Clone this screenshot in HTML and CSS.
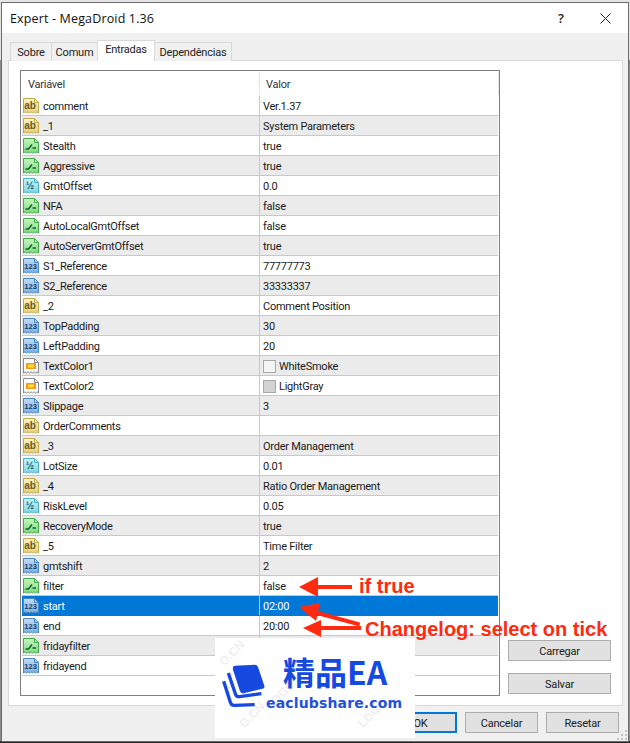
FILE: index.html
```html
<!DOCTYPE html>
<html lang="pt">
<head>
<meta charset="utf-8">
<title>Expert - MegaDroid 1.36</title>
<link rel="stylesheet" href="styles.css">
</head>
<body>
<svg class="defs" width="0" height="0" aria-hidden="true">
  <defs>
    <linearGradient id="gy" x1="0" y1="0" x2="0" y2="1"><stop offset="0" stop-color="#fbf3c4"/><stop offset="1" stop-color="#e6d27c"/></linearGradient>
    <linearGradient id="gg" x1="0" y1="0" x2="0" y2="1"><stop offset="0" stop-color="#c5f5c0"/><stop offset="1" stop-color="#7fdc82"/></linearGradient>
    <linearGradient id="gc" x1="0" y1="0" x2="0" y2="1"><stop offset="0" stop-color="#cdf3f7"/><stop offset="1" stop-color="#7fd6e4"/></linearGradient>
    <linearGradient id="gb" x1="0" y1="0" x2="0" y2="1"><stop offset="0" stop-color="#c3dcf3"/><stop offset="1" stop-color="#7eb0e0"/></linearGradient>
    <path id="page" d="M.5 .5H11.5L15.5 4.5V15L14 13.8 12.5 15 11 13.8 9.5 15 8 13.8 6.5 15 5 13.8 3.5 15 2 13.8 .5 15Z"/>
    <path id="fold" d="M11.5 .5V4.5H15.5" fill="none"/>
    <symbol id="i-ab" viewBox="0 0 16 16">
      <use href="#page" fill="url(#gy)" stroke="#c2a94e"/><use href="#fold" stroke="#c2a94e"/>
      <text x="7" y="11" class="ic-txt ic-ab">ab</text>
    </symbol>
    <symbol id="i-bool" viewBox="0 0 16 16">
      <use href="#page" fill="url(#gg)" stroke="#45a84b"/><use href="#fold" stroke="#45a84b"/>
      <path d="M2.5 11H5.5L9 6.5" fill="none" stroke="#12622a" stroke-width="1.5"/><path d="M9.5 10H13" fill="none" stroke="#12622a" stroke-width="1.5"/>
    </symbol>
    <symbol id="i-dbl" viewBox="0 0 16 16">
      <use href="#page" fill="url(#gc)" stroke="#4aaec4"/><use href="#fold" stroke="#4aaec4"/>
      <text x="6.8" y="11" class="ic-txt ic-half">½</text>
    </symbol>
    <symbol id="i-int" viewBox="0 0 16 16">
      <use href="#page" fill="url(#gb)" stroke="#4b86c0"/><use href="#fold" stroke="#4b86c0"/>
      <text x="7.6" y="10.8" class="ic-txt ic-num">123</text>
    </symbol>
    <symbol id="i-col" viewBox="0 0 16 16">
      <use href="#page" fill="#fdfdfd" stroke="#8a8a8a"/><use href="#fold" stroke="#8a8a8a"/>
      <rect x="3" y="5" width="10" height="6" fill="#f7941a"/>
      <rect x="5" y="6.5" width="6" height="3" fill="#ffe23a"/>
    </symbol>
  </defs>
</svg>

<div class="window">
  <header class="titlebar">
    <h1 class="title">Expert - MegaDroid 1.36</h1>
    <span class="help">?</span>
    <svg class="close" width="11" height="11" viewBox="0 0 11 11"><path d="M.5 .5L10.5 10.5M10.5 .5L.5 10.5" stroke="#222" stroke-width="1" fill="none"/></svg>
  </header>

  <div class="content">
    <nav class="tabs">
      <span class="tab">Sobre</span>
      <span class="tab tab-w2">Comum</span>
      <span class="tab tab-active">Entradas</span>
      <span class="tab tab-w4">Dependências</span>
    </nav>

    <section class="panel">
      <div class="grid">
        <div class="head"><span class="head-var">Variável</span><span class="head-val">Valor</span></div>

        <div class="row"><div class="name"><svg class="ico"><use href="#i-ab"/></svg>comment</div><div class="val">Ver.1.37</div></div>
        <div class="row alt"><div class="name"><svg class="ico"><use href="#i-ab"/></svg>_1</div><div class="val">System Parameters</div></div>
        <div class="row"><div class="name"><svg class="ico"><use href="#i-bool"/></svg>Stealth</div><div class="val">true</div></div>
        <div class="row alt"><div class="name"><svg class="ico"><use href="#i-bool"/></svg>Aggressive</div><div class="val">true</div></div>
        <div class="row"><div class="name"><svg class="ico"><use href="#i-dbl"/></svg>GmtOffset</div><div class="val">0.0</div></div>
        <div class="row alt"><div class="name"><svg class="ico"><use href="#i-bool"/></svg>NFA</div><div class="val">false</div></div>
        <div class="row"><div class="name"><svg class="ico"><use href="#i-bool"/></svg>AutoLocalGmtOffset</div><div class="val">false</div></div>
        <div class="row alt"><div class="name"><svg class="ico"><use href="#i-bool"/></svg>AutoServerGmtOffset</div><div class="val">true</div></div>
        <div class="row"><div class="name"><svg class="ico"><use href="#i-int"/></svg>S1_Reference</div><div class="val">77777773</div></div>
        <div class="row alt"><div class="name"><svg class="ico"><use href="#i-int"/></svg>S2_Reference</div><div class="val">33333337</div></div>
        <div class="row"><div class="name"><svg class="ico"><use href="#i-ab"/></svg>_2</div><div class="val">Comment Position</div></div>
        <div class="row alt"><div class="name"><svg class="ico"><use href="#i-int"/></svg>TopPadding</div><div class="val">30</div></div>
        <div class="row"><div class="name"><svg class="ico"><use href="#i-int"/></svg>LeftPadding</div><div class="val">20</div></div>
        <div class="row alt"><div class="name"><svg class="ico"><use href="#i-col"/></svg>TextColor1</div><div class="val"><span class="swatch sw-smoke"></span>WhiteSmoke</div></div>
        <div class="row"><div class="name"><svg class="ico"><use href="#i-col"/></svg>TextColor2</div><div class="val"><span class="swatch sw-gray"></span>LightGray</div></div>
        <div class="row alt"><div class="name"><svg class="ico"><use href="#i-int"/></svg>Slippage</div><div class="val">3</div></div>
        <div class="row"><div class="name"><svg class="ico"><use href="#i-ab"/></svg>OrderComments</div><div class="val"></div></div>
        <div class="row alt"><div class="name"><svg class="ico"><use href="#i-ab"/></svg>_3</div><div class="val">Order Management</div></div>
        <div class="row"><div class="name"><svg class="ico"><use href="#i-dbl"/></svg>LotSize</div><div class="val">0.01</div></div>
        <div class="row alt"><div class="name"><svg class="ico"><use href="#i-ab"/></svg>_4</div><div class="val">Ratio Order Management</div></div>
        <div class="row"><div class="name"><svg class="ico"><use href="#i-dbl"/></svg>RiskLevel</div><div class="val">0.05</div></div>
        <div class="row alt"><div class="name"><svg class="ico"><use href="#i-bool"/></svg>RecoveryMode</div><div class="val">true</div></div>
        <div class="row"><div class="name"><svg class="ico"><use href="#i-ab"/></svg>_5</div><div class="val">Time Filter</div></div>
        <div class="row alt"><div class="name"><svg class="ico"><use href="#i-int"/></svg>gmtshift</div><div class="val">2</div></div>
        <div class="row"><div class="name"><svg class="ico"><use href="#i-bool"/></svg>filter</div><div class="val">false</div></div>
        <div class="row sel"><div class="name"><svg class="ico"><use href="#i-int"/></svg>start</div><div class="val">02:00</div></div>
        <div class="row"><div class="name"><svg class="ico"><use href="#i-int"/></svg>end</div><div class="val">20:00</div></div>
        <div class="row alt"><div class="name"><svg class="ico"><use href="#i-bool"/></svg>fridayfilter</div><div class="val"></div></div>
        <div class="row"><div class="name"><svg class="ico"><use href="#i-int"/></svg>fridayend</div><div class="val"></div></div>
      </div>

      <aside class="side">
        <button class="btn btn-side">Carregar</button>
        <button class="btn btn-side">Salvar</button>
      </aside>
    </section>

    <footer class="footer">
      <button class="btn btn-foot btn-ok">OK</button>
      <button class="btn btn-foot">Cancelar</button>
      <button class="btn btn-foot">Resetar</button>
    </footer>
  </div>

  <svg class="grip" width="11" height="11" viewBox="0 0 11 11"><path d="M8 0h2v2H8zM4 4h2v2H4zM8 4h2v2H8zM0 8h2v2H0zM4 8h2v2H4zM8 8h2v2H8z" fill="#c4c4c4"/></svg>
</div>

<svg class="arrows" width="630" height="743" viewBox="0 0 630 743" aria-hidden="true">
  <path d="M352 585H316V589H352Z" fill="#ff2a10"/>
  <path d="M299 587L318 577V597Z" fill="#ff2a10"/>
  <path d="M360 622.5L316 610.5 315 614.5 359.5 626.5Z" fill="#ff2a10"/>
  <path d="M299 607L320 603 316 621Z" fill="#ff2a10"/>
  <path d="M361 626H318V630H361Z" fill="#ff2a10"/>
  <path d="M303 628L321 620V637Z" fill="#ff2a10"/>
</svg>
<span class="note note-if">if true</span>
<span class="note note-log">Changelog: select on tick</span>

<div class="promo">
  <span class="wm wm1">O.CN</span>
  <span class="wm wm2">LOGO</span>
  <span class="wm wm3">LOGO</span>
  <span class="wm wm4">G.CN</span>
  <svg class="promo-logo" width="44" height="45" viewBox="15 80 130 135">
    <path d="M50 93Q50 88 56 88L116 85Q122 85 125 92L144 148Q146 156 138 157L82 171Q74 172 71 165L50 100Z" fill="#1549e0"/>
    <path d="M36 110L57 172Q60 182 70 181L135 172" fill="none" stroke="#1549e0" stroke-width="10"/>
    <path d="M22 135L42 198Q45 208 55 207L115 205" fill="none" stroke="#1549e0" stroke-width="10"/>
  </svg>
  <div class="promo-text">
    <div class="promo-cn">精品EA</div>
    <div class="promo-url">eaclubshare.com</div>
  </div>
</div>
</body>
</html>
```

FILE: styles.css
```css
* { box-sizing: border-box; }
html, body { margin: 0; padding: 0; }
body {
  width: 630px;
  height: 743px;
  overflow: hidden;
  position: relative;
  background: linear-gradient(to bottom, #e4e4e4 0, #e4e4e4 60px, #8d8d8d 60px, #8d8d8d 741px, #222 741px);
  font-family: "Open Sans", "Noto Sans", sans-serif;
  padding: 2px 1px 1px 1px;
}
.defs { position: absolute; }

.window {
  position: relative;
  width: 628px;
  height: 740px;
  border: 1px solid #6c6c6c;
  background: #f0f0f0;
  display: flex;
  flex-direction: column;
}

.titlebar {
  height: 30px;
  background: #fff;
  display: flex;
  align-items: center;
  padding: 0 17px 0 8px;
  flex: none;
}
.title {
  margin: 0;
  font-family: "Open Sans", sans-serif;
  font-weight: 400;
  font-size: 12.5px;
  letter-spacing: .15px;
  color: #111;
  flex: 1;
}
.help { font-size: 13px; color: #222; font-weight: 600; margin-right: 36px; }
.close { flex: none; }

.content {
  flex: 1;
  display: flex;
  flex-direction: column;
  padding: 7px 6px 0 6px;
}

.tabs {
  display: flex;
  align-items: flex-end;
  height: 21px;
  padding-left: 2px;
  position: relative;
  z-index: 1;
  margin-bottom: -1px;
}
.tab {
  height: 19px;
  width: 42px;
  border: 1px solid #d9d9d9;
  border-bottom: 0;
  background: #f0f0f0;
  font-family: "Roboto", sans-serif;
  font-size: 11px;
  letter-spacing: -.2px;
  color: #222;
  display: flex;
  align-items: center;
  justify-content: center;
  margin-right: -1px;
}
.tab-w2 { width: 47px; }
.tab-active { width: 58px; height: 21px; background: #fff; z-index: 1; padding-bottom: 3px; }
.tab-w4 { width: 78px; }

.panel {
  height: 646px;
  width: 615px;
  background: #fff;
  border: 1px solid #d9d9d9;
  padding: 9px 0 0 11px;
  display: flex;
  flex: none;
}

.grid {
  width: 480px;
  height: 626px;
  border: 1px solid #7f7f7f;
  padding-left: 1px;
  padding-top: 1px;
  flex: none;
  font-family: "Roboto", sans-serif;
  font-size: 11px;
  letter-spacing: -.25px;
  color: #1a1a1a;
}
.head {
  height: 23px;
  display: grid;
  grid-template-columns: 237px 1fr;
  align-items: center;
  color: #333;
  margin-bottom: 1px;
  border-right: 1px solid #e5e5e5;
}
.head-var { padding: 2px 0 0 6px; }
.head-val { padding: 2px 0 0 6px; border-left: 1px solid #e5e5e5; height: 100%; display: flex; align-items: center; }

.row {
  height: 20px;
  display: grid;
  grid-template-columns: 237px 1fr;
  border-bottom: 1px solid #c8c8c8;
  width: 476px;
}
.row.alt { background: #ebebeb; }
.row.sel { background: #0078d7; color: #fff; border-bottom-color: #0078d7; }
.name { display: flex; align-items: center; gap: 4px; padding: 1px 0 0 1px; white-space: nowrap; }
.val {
  display: flex;
  align-items: center;
  border-left: 1px solid #c8c8c8;
  padding: 1px 0 0 3px;
  white-space: nowrap;
}
.ico { width: 16px; height: 16px; flex: none; display: block; }
.ic-txt { font-family: "Liberation Sans", sans-serif; text-anchor: middle; letter-spacing: 0; }
.ic-ab { font-size: 10px; font-weight: 700; fill: #6a5a20; }
.ic-half { font-size: 10px; fill: #0f5a70; font-weight: 700; }
.ic-num { font-size: 7.5px; font-weight: 700; fill: #123f70; }
.swatch { width: 13px; height: 13px; border: 1px solid #a8a8a8; margin-right: 3px; flex: none; }
.sw-smoke { background: #f5f5f5; }
.sw-gray { background: #d3d3d3; }

.side {
  width: 103px;
  margin-left: 8px;
  display: flex;
  flex-direction: column;
  gap: 12px;
  padding-top: 570px;
}
.btn {
  font-family: "Roboto", sans-serif;
  font-size: 11px;
  letter-spacing: -.2px;
  color: #1a1a1a;
  background: #e1e1e1;
  border: 1px solid #adadad;
  padding: 1px 0 0;
  border-radius: 0;
}
.btn-side { width: 103px; height: 21px; }

.footer {
  display: flex;
  justify-content: flex-end;
  gap: 8px;
  padding: 6px 3px 0 0;
}
.btn-foot { width: 73px; height: 21px; }
.btn-ok { border: 2px solid #0078d7; }

.grip { position: absolute; right: 0; bottom: 0; }

.arrows { position: absolute; left: 0; top: 0; pointer-events: none; }
.note {
  position: absolute;
  font-family: "Liberation Sans", sans-serif;
  font-weight: 700;
  font-size: 20px;
  line-height: 22px;
  color: #ff2a10;
  white-space: nowrap;
}
.note-if { left: 359px; top: 575px; }
.note-log { left: 365px; top: 618px; }

.promo {
  position: absolute;
  left: 215px;
  top: 638px;
  width: 200px;
  height: 100px;
  background: #fff;
  overflow: hidden;
  display: flex;
  align-items: flex-start;
}
.wm {
  position: absolute;
  font-family: "Liberation Sans", sans-serif;
  font-size: 12px;
  font-weight: 700;
  color: #efefef;
  transform: rotate(-45deg);
}
.wm1 { left: 2px; top: 8px; }
.wm2 { left: 48px; top: 50px; }
.wm3 { left: 140px; top: 68px; }
.wm4 { left: 22px; top: 70px; }
.promo-logo { position: relative; margin: 25px 0 0 6px; flex: none; }
.promo-text { position: relative; margin-left: 3px; }
.promo-cn {
  font-family: "Noto Sans CJK SC", sans-serif;
  font-weight: 700;
  font-size: 32px;
  line-height: 38px;
  color: #1549e0;
  margin: 14px 0 0 15px;
  white-space: nowrap;
}
.promo-url {
  font-family: "DejaVu Sans", sans-serif;
  font-weight: 700;
  font-size: 14px;
  line-height: 16px;
  letter-spacing: .15px;
  color: #1e50dc;
  white-space: nowrap;
  margin: 5px 0 0 -2px;
}
```
